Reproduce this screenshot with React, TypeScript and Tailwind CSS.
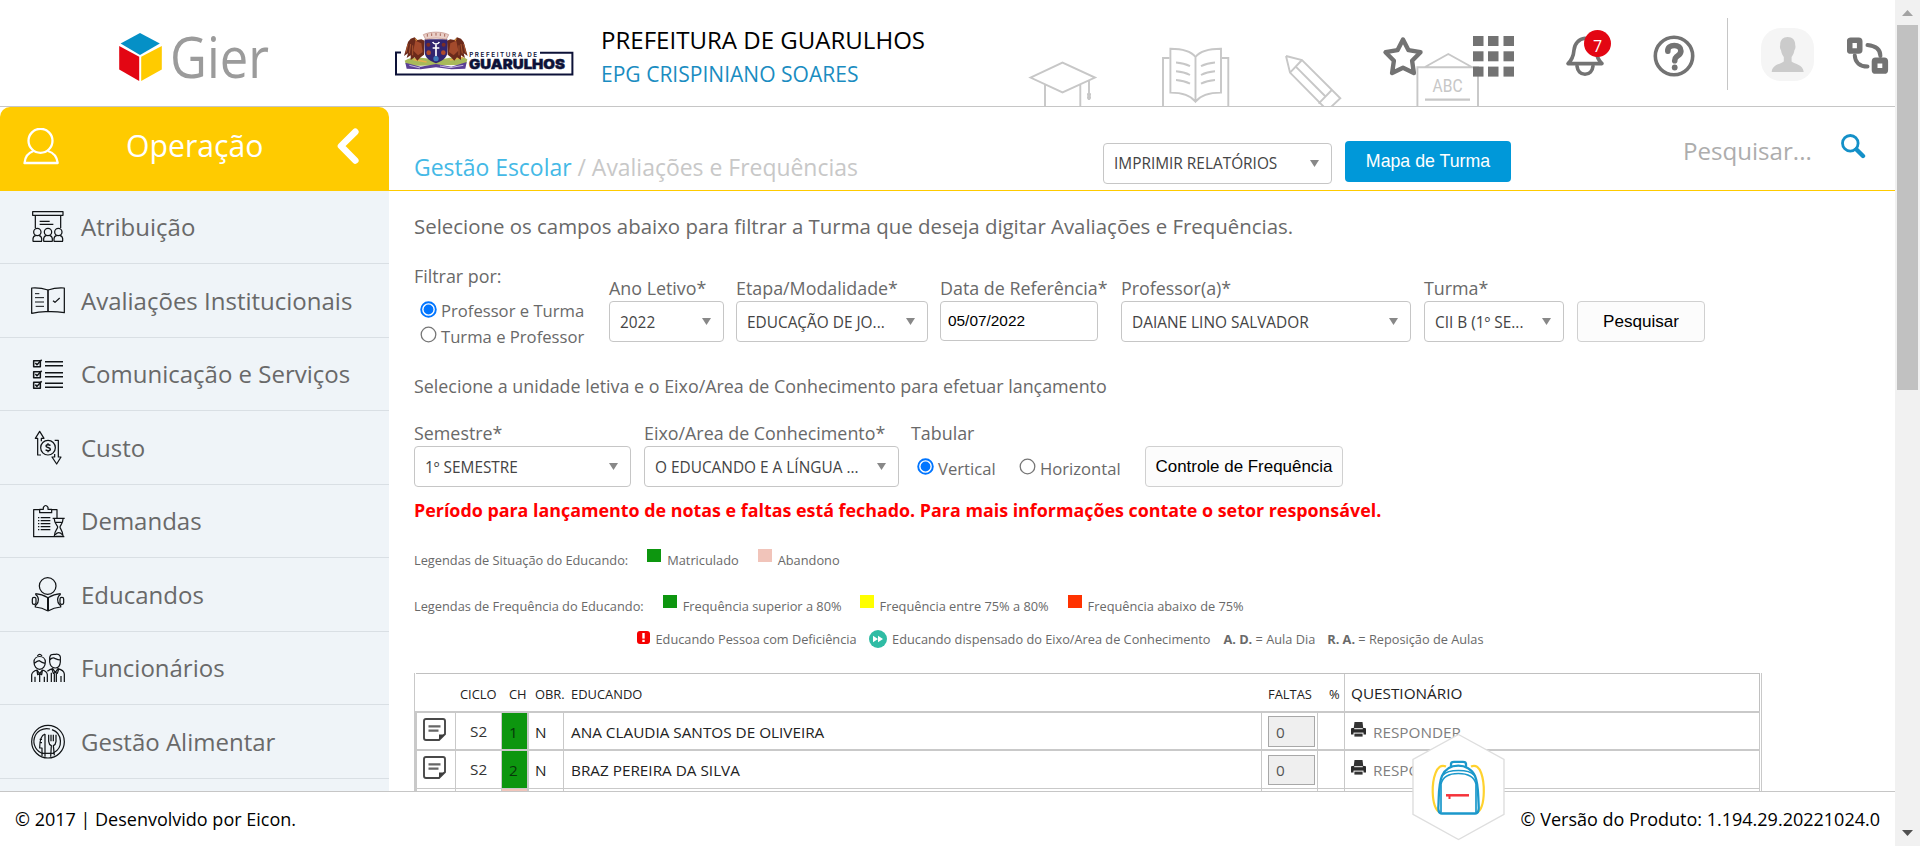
import React from "react";
import type { ReactNode } from "react";

/* ---------- header drawings ---------- */

function GierLogo() {
  return (
    <svg className="block overflow-visible" width="155" height="54" viewBox="117 30 155 54">
      <polygon points="140,33 159.8,43.6 140,55 120.6,43.6" fill="#0590c6" />
      <polygon points="119.2,46 139.2,56.8 139.2,81 119.2,69.6" fill="#e30613" />
      <polygon points="141.2,56.8 161.8,46 161.8,69.6 141.2,81" fill="#ffcb00" />
      <text x="170" y="77.8" fontSize="56" fill="#9b9b9b" textLength="99" lengthAdjust="spacingAndGlyphs" fontFamily="'Open Sans', sans-serif">
        Gier
      </text>
    </svg>
  );
}

function Eagle() {
  return (
    <g>
      <path d="M134 62 L124 58 L112 60 L104 52 L92 56 L84 66 L72 108 L84 100 L80 114 L92 106 L92 120 L104 112 L112 122 L122 112 L132 104 Z" fill="#6b2a1b" />
      <path d="M106 62 L124 70 L128 96 L114 106 L100 92 Z" fill="#a34a2c" />
      <path d="M84 72 L78 98 M92 72 L88 100 M98 76 L98 106" stroke="#a9552f" strokeWidth="3" fill="none" />
      <path d="M112 60 L104 54 L108 64 Z" fill="#e09a3c" />
    </g>
  );
}

function CityLogo() {
  return (
    <svg className="block" width="182" height="50" viewBox="394 28 182 50">
      <path d="M401 52.6 H396 V74.6 H572.4 V52.8 H540" fill="none" stroke="#0d1238" strokeWidth="2" />
      <g transform="translate(380 20) scale(0.3333)">
        <path d="M74 122 C100 104 132 116 168 118 C204 120 232 100 262 118 L258 134 L80 138 Z" fill="#a8b95a" />
        <path d="M100 118 L140 126 M210 120 L250 112" stroke="#e6b04e" strokeWidth="5" />
        <path d="M76 128 L122 140 L168 132 L214 140 L260 126 L256 146 L214 148 L168 142 L122 148 L80 146 Z" fill="#5b3f95" />
        <path d="M88 136 L120 144 M180 138 L210 143 L250 136" stroke="#c7b9e2" strokeWidth="3" fill="none" />
        <Eagle />
        <g transform="translate(335 0) scale(-1 1)">
          <Eagle />
        </g>
        <path d="M134 58 H202 V96 C202 114 184 124 168 130 C152 124 134 114 134 96 Z" fill="#32256f" />
        <circle cx="145" cy="74" r="6" fill="#7b2d26" />
        <circle cx="191" cy="74" r="6" fill="#7b2d26" />
        <circle cx="146" cy="98" r="7" fill="#b04a2b" />
        <circle cx="190" cy="98" r="7" fill="#b04a2b" />
        <circle cx="168" cy="116" r="8" fill="#3d79b8" />
        <path d="M168 74 V108 M158 84 H178 M158 66 C162 74 174 74 178 66" stroke="#fff" strokeWidth="5" fill="none" />
        <path d="M130 44 C150 34 186 34 206 44 L199 58 C180 53 156 53 137 58 Z" fill="#ead0c8" stroke="#b98478" strokeWidth="2" />
        <path d="M142 42 V50 M155 40 V48 M168 39 V47 M181 40 V48 M194 42 V50" stroke="#a8685a" strokeWidth="3" />
      </g>
      <text x="469.2" y="56.6" fontSize="6.3" fontWeight="600" fill="#0d1238" textLength="68" fontFamily="Inter, sans-serif">
        PREFEITURA DE
      </text>
      <text x="469" y="68.8" fontSize="13.6" fontWeight="900" fill="#0d1238" stroke="#0d1238" strokeWidth="0.4" textLength="96" lengthAdjust="spacingAndGlyphs" fontFamily="Inter, sans-serif">
        GUARULHOS
      </text>
    </svg>
  );
}

function SchoolDoodles() {
  return (
    <svg className="absolute left-[1025px] top-[46px]" width="460" height="60" viewBox="1025 46 460 60" fill="none" stroke="#c7c7c7" strokeWidth="1.9">
      <path d="M1030.5 77.6 L1062.5 62.6 L1095 77.6 L1062.5 92.4 Z M1045 85 V107 M1080.3 85 V107 M1089 80.5 V94" />
      <path d="M1087 94.5 H1091 M1087 97.5 H1091 M1089 94 V100" strokeWidth="2.4" />
      <path d="M1169.5 58 H1163 V107 M1222 58 H1228.3 V107" />
      <path d="M1195.5 57 C1190 50 1179 48.8 1170.4 48.8 V92.6 C1181 92.6 1190 94.5 1195.5 101.6 C1201 94.5 1210 92.6 1221 92.6 V48.8 C1212 48.8 1201 50 1195.5 57 V101" />
      <path d="M1176 62.5 Q1184 63 1190 66.2 M1176 71.3 Q1184 71.8 1190 75 M1176 80 Q1184 80.5 1190 83.7 M1215 62.5 Q1207 63 1201 66.2 M1215 71.3 Q1207 71.8 1201 75 M1215 80 Q1207 80.5 1201 83.7" />
      <path d="M1286 56 L1302 60 L1340.3 98.3 L1331 107 M1286 56 L1290 72.6 L1324 107 M1302 60 L1290 72.6 M1296 66.8 L1326 97 M1331.8 90 L1318.6 103.6" />
      <path d="M1417.4 107 V67.3 H1478 V107 M1425 67 L1448.3 54 L1471.7 67" />
      <path d="M1425 99.7 H1470" strokeWidth="2.2" />
      <text x="1432.6" y="92.4" fontSize="17.5" fill="#c7c7c7" stroke="none" textLength="30" lengthAdjust="spacingAndGlyphs" fontFamily="Roboto, sans-serif">
        ABC
      </text>
    </svg>
  );
}

function StarIcon() {
  return (
    <svg className="block" width="42" height="42" viewBox="1382.5 35 42 42">
      <path d="M1403.5 39.5 L1409 50.2 L1421 52.2 L1412.6 60.8 L1414.4 73 L1403.5 67.8 L1392.6 73 L1394.4 60.8 L1386 52.2 L1398 50.2 Z" fill="none" stroke="#737373" strokeWidth="4.4" strokeLinejoin="round" />
    </svg>
  );
}

function AppsIcon() {
  const xs = [0, 15, 30.5];
  const ys = [0, 15.3, 30.6];
  return (
    <svg className="block" width="41" height="41" viewBox="0 0 41 41" fill="#737373">
      {ys.map((y) => xs.map((x) => <rect key={`${x}-${y}`} x={x} y={y} width="10.5" height="10" />))}
    </svg>
  );
}

function BellIcon() {
  return (
    <svg className="block" width="42" height="42" viewBox="1564 35 42 42" fill="none" stroke="#737373" strokeWidth="3.6" strokeLinecap="round" strokeLinejoin="round">
      <path d="M1568 63.6 H1602 C1598 60 1596.5 56 1596 50 C1595.5 43.5 1591 38.8 1585 38.3 C1579 38.8 1574.5 43.5 1574 50 C1573.5 56 1572 60 1568 63.6 Z" />
      <path d="M1577 66 C1577.5 71 1580.5 74.2 1585 74.2 C1589.5 74.2 1592.5 71 1593 66" />
    </svg>
  );
}

function HelpIcon() {
  return (
    <svg className="block" width="42" height="42" viewBox="1652.5 35.3 42 42" fill="none" stroke="#737373">
      <circle cx="1673.5" cy="56.3" r="18.7" strokeWidth="3.6" />
      <path d="M1667.3 51.5 C1667 47.5 1670 45.8 1673.8 45.8 C1677.8 45.8 1680.4 48 1680.4 51.2 C1680.4 54.5 1677.8 55.6 1676 57 C1674.4 58.3 1674.2 59.4 1674.2 61" strokeWidth="5.6" strokeLinecap="round" />
      <circle cx="1674.2" cy="67.8" r="2.9" fill="#737373" stroke="none" />
    </svg>
  );
}

function Avatar() {
  return (
    <svg className="block" width="53" height="53" viewBox="0 0 53 53">
      <rect width="53" height="53" rx="20" fill="#f5f5f5" />
      <path d="M26.7 9 C31.5 9 34.3 12 34.2 17 C34.8 19 34.4 21 33.4 22.3 C33 25 32 27.3 30.6 29 V33.5 C34 36.5 42 36 42.7 44 H10.7 C11.4 36 19.4 36.5 22.8 33.5 V29 C21.4 27.3 20.4 25 20 22.3 C19 21 18.6 19 19.2 17 C19.1 12 21.9 9 26.7 9 Z" fill="#cbcbcb" />
    </svg>
  );
}

function SwitchIcon() {
  return (
    <svg className="block" width="42" height="38" viewBox="1847 36.5 42 38" fill="none" stroke="#737373">
      <rect x="1849.7" y="39.7" width="10" height="10.8" rx="1" strokeWidth="5.6" />
      <rect x="1874.6" y="60" width="10.6" height="10.4" rx="1" strokeWidth="5.8" />
      <path d="M1867.5 44.6 C1876 45.5 1880.4 49.5 1880.4 55.5 M1854.8 55 C1855 62 1860 66 1867.5 66" strokeWidth="4" strokeLinecap="round" />
    </svg>
  );
}

/* ---------- sidebar icons ---------- */

function MenuIcon({ box, children }: { box: string; children: ReactNode }) {
  return (
    <svg className="block shrink-0 overflow-visible" width="34" height="34" viewBox={box} fill="none" stroke="#111417" strokeWidth="3.7" strokeLinejoin="round">
      {children}
    </svg>
  );
}

const menu: { label: string; height: string; icon: ReactNode }[] = [
  {
    label: "Atribuição",
    height: "h-[73px]",
    icon: (
      <MenuIcon box="93 60 102 102">
        <rect x="98" y="65" width="91" height="11" />
        <path d="M106 77 V114 M182 77 V114 M119 94 H149 M119 103 H160" />
        {[112, 144, 175].map((x) => (
          <g key={x}>
            <circle cx={x} cy="126" r="11" />
            <path d={`M${x - 13} 154 V146 Q${x - 12} 138 ${x - 5} 137 M${x + 13} 154 V146 Q${x + 12} 138 ${x + 5} 137 M${x - 14} 154 H${x + 14}`} />
          </g>
        ))}
      </MenuIcon>
    ),
  },
  {
    label: "Avaliações Institucionais",
    height: "h-[74px]",
    icon: (
      <MenuIcon box="93 280 102 102">
        <path d="M144 298 Q120 290 95 292 V368 Q120 362 144 363 Q168 362 193 366 V292 Q168 290 144 298" />
        <path d="M144 297 V364" strokeWidth="5" />
        <path d="M105 309 H118 M105 321 H132 M105 334 H132 M107 347 H132" strokeWidth="3" />
        <path d="M159 330 L165 335 L179 322" />
      </MenuIcon>
    ),
  },
  {
    label: "Comunicação e Serviços",
    height: "h-[73px]",
    icon: (
      <MenuIcon box="93 501 102 102">
        {[512, 545, 577].map((y) => (
          <g key={y}>
            <rect x="101" y={y} width="20" height="18" strokeWidth="4.6" />
            <path d={`M106 ${y + 7} L111 ${y + 12} L125 ${y - 3}`} strokeWidth="4.6" />
            <path d={`M135 ${y + 3} H189 M135 ${y + 15} H189`} strokeWidth="4.6" />
          </g>
        ))}
      </MenuIcon>
    ),
  },
  {
    label: "Custo",
    height: "h-[74px]",
    icon: (
      <MenuIcon box="93 721 102 102">
        <circle cx="144" cy="771" r="22" />
        <path d="M123 793 H113 V743 H106 L119 722 L132 743 H124 V752" />
        <path d="M164 749 H175 V799 H183 L170 820 L156 799 H164 V790" />
        <path d="M151 765 C149 761 138 761 138 766 C138 772 151 769 151 776 C151 782 139 781 137 777 M144 758 V763 M144 780 V785" strokeWidth="4.4" />
      </MenuIcon>
    ),
  },
  {
    label: "Demandas",
    height: "h-[73px]",
    icon: (
      <MenuIcon box="93 12 102 102">
        <path d="M119 29 H101 V110 H193 M155 29 H171 V54 M119 38 V28 H130 V22 Q137 11 144 22 V28 H155 V38 Z" />
        <path d="M122 53 H151 M122 62 H151 M122 71 H151 M122 80 H151 M122 89 H151" strokeWidth="4" />
        <path d="M114 53 h4 M114 62 h4 M114 71 h4 M114 80 h4 M114 89 h4" strokeWidth="4" />
        <path d="M158 55 H194 M161 109 H192 M163 57 C163 72 173 76 173 81 C173 87 163 92 163 108 M189 57 C189 72 180 76 180 81 C180 87 189 92 189 108 M167 67 H185 M166 104 Q176 92 187 104" />
      </MenuIcon>
    ),
  },
  {
    label: "Educandos",
    height: "h-[74px]",
    icon: (
      <MenuIcon box="93 232 102 102">
        <circle cx="143" cy="256" r="25" />
        <path d="M144 291 Q126 280 106 279 M144 291 Q162 280 182 279 M144 331 Q126 321 106 319 V312 M144 331 Q162 321 182 319 V312" />
        <path d="M144 290 V330" strokeWidth="6" />
        <rect x="97" y="290" width="11" height="21" rx="5" />
        <rect x="180" y="290" width="11" height="21" rx="5" />
        <path d="M106 281 C118 288 118 305 108 314 M182 281 C170 288 170 305 180 314" />
      </MenuIcon>
    ),
  },
  {
    label: "Funcionários",
    height: "h-[73px]",
    icon: (
      <MenuIcon box="93 453 102 102">
        <path d="M102 486 C102 464 136 464 136 486 C136 500 128 508 119 508 C110 508 102 500 102 486 Z M112 468 Q119 458 126 468 M103 490 Q112 482 118 482 Q126 488 135 490" />
        <path d="M95 546 V524 Q97 514 111 510 L119 521 L127 510 Q141 514 142 524 V546 M105 546 V530 M133 546 V530 M119 521 V546 M111 512 L113 524 L119 521 L125 524 L127 512" />
        <path d="M149 478 C148 460 160 463 166 463 C180 461 183 470 181 480 V486 C180 498 173 504 166 504 C157 504 150 496 149 486 Z M149 480 Q158 470 166 476 Q174 480 181 480" />
        <path d="M142 514 Q150 508 158 506 L166 517 L174 506 Q192 511 193 522 V546 M183 546 V528 M154 518 V546 M163 546 V521 M169 546 V521 M156 508 L160 520 L166 517 L172 520 L176 508" />
      </MenuIcon>
    ),
  },
  {
    label: "Gestão Alimentar",
    height: "h-[74px]",
    icon: (
      <MenuIcon box="93 673 102 102">
        <circle cx="144" cy="723" r="49" />
        <path d="M130 759 A38 38 0 0 1 150 685 M156 687 A38 38 0 0 1 160 757" />
        <path d="M135 700 C122 704 119 722 119 742 H126 V766 M135 700 V768 M119 716 H126 M119 726 H126" />
        <path d="M146 702 V722 Q147 732 154 735 L152 768 M168 702 V722 Q167 732 160 735 L163 764 M153 702 V722 M160 702 V722" />
        <path d="M126 758 H162" />
      </MenuIcon>
    ),
  },
];

/* ---------- form pieces ---------- */

function SelectBox({ text, width, offset = "pt-[3px]" }: { text: string; width: string; offset?: string }) {
  return (
    <div className={`${width} flex h-[41px] shrink-0 items-center justify-between rounded-[4px] border border-[#c6c6c6] bg-white pr-[12px] pl-[10px]`}>
      <span className={`${offset} text-[15.4px] leading-[20px] whitespace-nowrap text-[#444]`}>{text}</span>
      <svg width="9" height="7" viewBox="0 0 9 7">
        <path d="M0 0 H9 L4.5 7 Z" fill="#888" />
      </svg>
    </div>
  );
}

function Field({ label, className, children }: { label: string; className: string; children: ReactNode }) {
  return (
    <div className={`${className} shrink-0`}>
      <div className="h-[26px] text-[17.87px] leading-[26px] whitespace-nowrap">{label}</div>
      {children}
    </div>
  );
}

function Radio({ checked }: { checked?: boolean }) {
  return (
    <svg className="block shrink-0" width="17" height="17" viewBox="0 0 17 17">
      <circle cx="8.5" cy="8.5" r="7.3" fill="#fff" stroke={checked ? "#0075ff" : "#767676"} strokeWidth={checked ? 1.9 : 1.3} />
      {checked && <circle cx="8.5" cy="8.5" r="4.9" fill="#0075ff" />}
    </svg>
  );
}

function Swatch({ color, text, gap }: { color: string; text: string; gap: string }) {
  return (
    <div className={`${gap} flex items-center`}>
      <span className={`${color} mb-[9px] h-[13px] w-[14px]`} />
      <span className="ml-[6px]">{text}</span>
    </div>
  );
}

function NoteIcon() {
  return (
    <svg className="block" width="23" height="23" viewBox="0 0 23 23">
      <path d="M3 1 H20 Q22 1 22 3 V16 L16 22 H3 Q1 22 1 20 V3 Q1 1 3 1 Z" fill="#fff" stroke="#484848" strokeWidth="1.9" />
      <path d="M16 22 V16.6 H22 Z" fill="#3c3c3c" />
      <path d="M5.5 8.3 H17.5 M5.5 12.6 H15.5" stroke="#666" strokeWidth="2.2" />
    </svg>
  );
}

function PrinterIcon() {
  return (
    <svg className="block" width="15" height="15" viewBox="0 0 15 15">
      <path d="M3.5 0 H11.5 L12.3 6.5 H2.7 Z" fill="#333" />
      <path d="M1 6 H14 Q15 6 15 7 V12.5 H0 V7 Q0 6 1 6 Z" fill="#2b2b2b" />
      <rect x="3.2" y="6.2" width="8.6" height="1" fill="#fff" />
      <rect x="2.5" y="10.6" width="10" height="4.4" fill="#fff" />
      <rect x="3.4" y="11.6" width="8.2" height="3" fill="#333" />
    </svg>
  );
}

function StudentRow({ num, name, className, inputHeight }: { num: number; name: string; className: string; inputHeight: string }) {
  return (
    <div className={`${className} flex border-r border-l-2 border-[#c9c9c9] text-[15.3px] leading-[38px] text-[#222]`}>
      <div className="w-[39px] border-r border-[#c9c9c9] pt-[5px] pl-[6px]">
        <NoteIcon />
      </div>
      <div className="w-[46px] border-r border-[#c9c9c9] pl-[14px] leading-[37px] text-[#333]">S2</div>
      <div className="w-[27px] border-r-2 border-[#c9c9c9] bg-[#0d960f] pl-[7px] text-[#07370a]">{num}</div>
      <div className="w-[35px] border-r border-[#c9c9c9] pl-[6px]">N</div>
      <div className="w-[698px] border-r border-[#c9c9c9] pl-[7px]">{name}</div>
      <div className="w-[56px] border-r border-[#c9c9c9] pt-[3px] pl-[6px]">
        <div className={`${inputHeight} w-[47px] border border-[#a8a8a8] bg-[#efefef] pl-[7px] text-[#555]`}>0</div>
      </div>
      <div className="w-[27px] border-r border-[#c9c9c9]" />
      <div className="flex pl-[6px]">
        <div className="pt-[9px]">
          <PrinterIcon />
        </div>
        <span className="ml-[7px] text-[#808080]">RESPONDER</span>
      </div>
    </div>
  );
}

function Backpack() {
  return (
    <svg className="absolute left-[1411px] top-[732px]" width="95" height="110" viewBox="1411 732 95 110" fill="none">
      <path d="M1458.5 734.5 L1504 759.4 V814.4 L1458.5 839.5 L1413 814.4 V759.4 Z" fill="#fff" stroke="#dedede" strokeWidth="1.4" />
      <path d="M1446 766.5 C1436 762 1432.5 780 1432.7 792 C1433 802 1435 810 1440 812.5 M1471 766.5 C1481 762 1484 780 1483.8 792 C1483.6 802 1482 810 1477 812.5" stroke="#ffd22e" strokeWidth="2.2" />
      <g stroke="#1b98cb" strokeWidth="2.3">
        <path d="M1442 813.5 H1475 C1479 813.5 1479 809 1478.6 804 C1478 794 1478.5 784 1475 776 C1472 769 1465 765.6 1458.3 765.6 C1451.5 765.6 1445 769 1442 776 C1438.5 784 1439 794 1438.5 804 C1438 809 1438 813.5 1442 813.5 Z" />
        <path d="M1441 812 V784 C1443 776 1450 773.5 1458.3 773.5 C1467 773.5 1474 776 1476 784 V812" strokeWidth="1.7" />
        <path d="M1443 775 C1448 769 1469 769 1474 775" strokeWidth="1.5" />
        <path d="M1451 767 V764 Q1451 761.8 1454 761.8 H1463 Q1466 761.8 1466 764 V767" />
      </g>
      <path d="M1446 795.3 H1469" stroke="#f5333a" strokeWidth="2.5" />
      <path d="M1449.5 795 V799" stroke="#f5333a" strokeWidth="2" />
    </svg>
  );
}

export default function App() {
  return (
    <div className="relative flex h-[846px] w-[1920px] overflow-hidden bg-white font-['Open_Sans',sans-serif] text-[#696969]">
      <div className="flex w-[1895px] flex-col">
        {/* header */}
        <header className="relative flex h-[107px] shrink-0 border-b border-[#c6c6c6]">
          <SchoolDoodles />
          <div className="relative ml-[117px] pt-[30px]">
            <GierLogo />
          </div>
          <div className="ml-[122px] pt-[28px]">
            <CityLogo />
          </div>
          <div className="ml-[25px] w-[782px] pt-[23px] whitespace-nowrap">
            <div className="text-[24.05px] leading-[34px] text-black">PREFEITURA DE GUARULHOS</div>
            <div className="text-[21.05px] leading-[34px] text-[#1a8cc1]">EPG CRISPINIANO SOARES</div>
          </div>
          <div className="relative flex">
            <div className="-ml-[1px] pt-[35px]">
              <StarIcon />
            </div>
            <div className="ml-[49px] pt-[36px]">
              <AppsIcon />
            </div>
            <div className="relative ml-[50px] pt-[35px]">
              <BellIcon />
              <span className="absolute top-[30px] left-[20px] h-[27px] w-[27px] rounded-full bg-[#e30613] text-center text-[16px] leading-[33px] text-white">7</span>
            </div>
            <div className="ml-[47px] pt-[35px]">
              <HelpIcon />
            </div>
            <div className="mt-[18px] ml-[32px] h-[72px] w-px bg-[#c6c6c6]" />
            <div className="mt-[28px] ml-[33px]">
              <Avatar />
            </div>
            <div className="ml-[33px] pt-[37px]">
              <SwitchIcon />
            </div>
          </div>
        </header>

        <div className="flex h-[684px] shrink-0 overflow-hidden">
          {/* sidebar */}
          <nav className="w-[389px] shrink-0 bg-[#eff4f8]">
            <div className="bg-white">
              <div className="flex h-[84px] items-start rounded-t-[10px] bg-[#ffcb00] pt-[21px] pl-[23px] text-white">
                <svg className="block" width="37" height="37" viewBox="23.5 128 37 37" fill="none" stroke="#fff" strokeWidth="2.3" strokeLinejoin="round">
                  <ellipse cx="41" cy="140.8" rx="12" ry="12" />
                  <path d="M34 151 C28 153 25.5 157 25 163 H58.2 C57.5 157 55 153 48.5 151" />
                </svg>
                <span className="ml-[66px] w-[210px] text-[30.2px] leading-[35px]">Operação</span>
                <svg className="block" width="24" height="37" viewBox="336 128 24 37" fill="none" stroke="#fff" strokeWidth="6.6" strokeLinecap="round">
                  <path d="M355.3 131.8 L341 146 L355.3 160.5" strokeLinejoin="round" />
                </svg>
              </div>
            </div>
            {menu.map((m) => (
              <div key={m.label} className={`${m.height} flex items-center border-b border-[#d9dfe4] pl-[31px]`}>
                {m.icon}
                <span className="ml-[16px] text-[24px] leading-[34px] whitespace-nowrap">{m.label}</span>
              </div>
            ))}
          </nav>

          {/* content */}
          <main className="w-[1506px]">
            <div className="flex h-[84px] border-b border-[#ffcb00] pl-[25px] whitespace-nowrap">
              <div className="w-[689px] pt-[43px] text-[22.95px] leading-[34px] text-[#c8c8c8]">
                <span className="text-[#44b9e6]">Gestão Escolar</span> / Avaliações e Frequências
              </div>
              <div className="pt-[36px]">
                <SelectBox text="IMPRIMIR RELATÓRIOS" width="w-[229px]" offset="pt-px" />
              </div>
              <div className="mt-[34px] ml-[13px] h-[41px] w-[166px] rounded-[4px] bg-[#0098d9] text-center font-['Liberation_Sans',sans-serif] text-[17.75px] leading-[41px] text-white">
                Mapa de Turma
              </div>
              <div className="ml-[172px] w-[157px] pt-[27px] text-[24.1px] leading-[34px] text-[#adadad]">Pesquisar...</div>
              <svg className="mt-[26px]" width="26" height="26" viewBox="1840 133 26 26" fill="none" stroke="#1490c8">
                <circle cx="1850.3" cy="143.3" r="7.8" strokeWidth="2.8" />
                <path d="M1856.5 149.5 L1863 156" strokeWidth="4.4" strokeLinecap="round" />
              </svg>
            </div>

            <div className="pl-[25px] whitespace-nowrap">
              <div className="h-[70px] text-[20.42px] leading-[70px]">
                Selecione os campos abaixo para filtrar a Turma que deseja digitar Avaliações e Frequências.
              </div>

              <div className="flex h-[88px]">
                <div className="w-[195px] shrink-0 text-[16.65px] leading-[28px]">
                  <div className="h-[30px] text-[17.87px] leading-[30px]">Filtrar por:</div>
                  <div className="mt-[6px] flex h-[26px] pl-[6px]">
                    <div className="pt-[4px]">
                      <Radio checked />
                    </div>
                    <span className="ml-[4px]">Professor e Turma</span>
                  </div>
                  <div className="flex h-[26px] pl-[6px]">
                    <div className="pt-[3px]">
                      <Radio />
                    </div>
                    <span className="ml-[4px]">Turma e Professor</span>
                  </div>
                </div>
                <div className="flex pt-[14px]">
                  <Field label="Ano Letivo*" className="w-[127px]">
                    <SelectBox text="2022" width="w-[115px]" />
                  </Field>
                  <Field label="Etapa/Modalidade*" className="w-[204px]">
                    <SelectBox text="EDUCAÇÃO DE JO..." width="w-[192px]" />
                  </Field>
                  <Field label="Data de Referência*" className="w-[181px]">
                    <div className="h-[40px] w-[158px] rounded-[4px] border border-[#c6c6c6] pl-[7px] font-['Liberation_Sans',sans-serif] text-[15.4px] leading-[37px] text-black">
                      05/07/2022
                    </div>
                  </Field>
                  <Field label="Professor(a)*" className="w-[303px]">
                    <SelectBox text="DAIANE LINO SALVADOR" width="w-[290px]" />
                  </Field>
                  <Field label="Turma*" className="w-[153px]">
                    <SelectBox text="CII B (1º SE..." width="w-[140px]" />
                  </Field>
                  <div className="mt-[26px] h-[41px] w-[128px] rounded-[4px] border border-[#d0d0d0] bg-[#fcfcfc] text-center font-['Liberation_Sans',sans-serif] text-[17.1px] leading-[40px] text-black">
                    Pesquisar
                  </div>
                </div>
              </div>

              <div className="h-[71px] text-[17.86px] leading-[74px]">
                Selecione a unidade letiva e o Eixo/Area de Conhecimento para efetuar lançamento
              </div>

              <div className="flex h-[67px]">
                <Field label="Semestre*" className="w-[230px]">
                  <SelectBox text="1º SEMESTRE" width="w-[217px]" />
                </Field>
                <Field label="Eixo/Area de Conhecimento*" className="w-[267px]">
                  <SelectBox text="O EDUCANDO E A LÍNGUA ..." width="w-[255px]" />
                </Field>
                <Field label="Tabular" className="w-[234px]">
                  <div className="flex pt-[9px] pl-[6px] text-[16.65px] leading-[28px]">
                    <div className="pt-[3px]">
                      <Radio checked />
                    </div>
                    <span className="ml-[4px] w-[81px]">Vertical</span>
                    <div className="pt-[3px]">
                      <Radio />
                    </div>
                    <span className="ml-[4px]">Horizontal</span>
                  </div>
                </Field>
                <div className="mt-[26px] h-[41px] w-[198px] rounded-[4px] border border-[#d0d0d0] bg-[#fcfcfc] text-center font-['Liberation_Sans',sans-serif] text-[16.95px] leading-[40px] text-black">
                  Controle de Frequência
                </div>
              </div>

              <div className="h-[45px] text-[17.87px] leading-[47px] font-bold text-[#ff0000]">
                Período para lançamento de notas e faltas está fechado. Para mais informações contate o setor responsável.
              </div>

              <div className="text-[12.8px] leading-[22px]">
                <div className="flex h-[56px] items-center">
                  <span>Legendas de Situação do Educando:</span>
                  <Swatch color="bg-[#0d960f]" text="Matriculado" gap="ml-[19px]" />
                  <Swatch color="bg-[#f1c4ba]" text="Abandono" gap="ml-[19px]" />
                </div>
                <div className="flex h-[36px] items-center">
                  <span>Legendas de Frequência do Educando:</span>
                  <Swatch color="bg-[#0d960f]" text="Frequência superior a 80%" gap="ml-[19px]" />
                  <Swatch color="bg-[#ffff00]" text="Frequência entre 75% a 80%" gap="ml-[18px]" />
                  <Swatch color="bg-[#ff3200]" text="Frequência abaixo de 75%" gap="ml-[19px]" />
                </div>
                <div className="flex h-[30px] items-center pl-[223px] text-[12.76px]">
                  <svg className="mb-[3px]" width="13" height="13" viewBox="0 0 13 13">
                    <rect width="13" height="13" rx="3" fill="#f50000" />
                    <rect x="5.3" y="2" width="2.4" height="5.6" fill="#fff" />
                    <rect x="5.3" y="8.8" width="2.4" height="2.2" fill="#fff" />
                  </svg>
                  <span className="ml-[5.5px]">Educando Pessoa com Deficiência</span>
                  <svg className="ml-[12.5px]" width="18" height="18" viewBox="0 0 18 18">
                    <circle cx="9" cy="9" r="9" fill="#2fbca4" />
                    <path d="M4 5.8 L9 9 L4 12.2 Z M9 5.8 L14 9 L9 12.2 Z" fill="#fff" />
                  </svg>
                  <span className="ml-[5px]">Educando dispensado do Eixo/Area de Conhecimento</span>
                  <span className="ml-[13px]">
                    <b>A. D.</b> = Aula Dia
                  </span>
                  <span className="ml-[12px]">
                    <b>R. A.</b> = Reposição de Aulas
                  </span>
                </div>
              </div>

              {/* table */}
              <div className="mt-[19px] h-[140px] w-[1348px] border-r border-l border-[#c9c9c9] pr-px">
                <div className="ml-px flex h-[38px] border-t border-r border-[#c0c0c0] pl-px text-[12.9px] leading-[41px] text-[#222]">
                  <div className="w-[39px]" />
                  <div className="w-[46px] pl-[4px]">CICLO</div>
                  <div className="w-[27px] pl-[7px]">CH</div>
                  <div className="w-[35px] pl-[6px]">OBR.</div>
                  <div className="w-[698px] pl-[7px]">EDUCANDO</div>
                  <div className="w-[56px] pl-[6px]">FALTAS</div>
                  <div className="w-[27px] border-r border-[#c9c9c9] pl-[11px]">%</div>
                  <div className="pl-[6px] text-[15.3px] leading-[38px]">QUESTIONÁRIO</div>
                </div>
                <div className="h-[2px] bg-[#c9c9c9]" />
                <StudentRow num={1} name="ANA CLAUDIA SANTOS DE OLIVEIRA" className="h-[38px] border-b-2" inputHeight="h-[31px] leading-[30px]" />
                <StudentRow num={2} name="BRAZ PEREIRA DA SILVA" className="h-[38px] border-b" inputHeight="mt-px h-[30px] leading-[28px]" />
                <div className="flex h-[2px] border-r border-l-2 border-[#c9c9c9]">
                  <div className="w-[39px] border-r border-[#c9c9c9]" />
                  <div className="w-[46px] border-r border-[#c9c9c9]" />
                  <div className="w-[27px] border-r-2 border-[#c9c9c9] bg-[#f1c4ba]" />
                  <div className="w-[35px] border-r border-[#c9c9c9]" />
                  <div className="w-[698px] border-r border-[#c9c9c9]" />
                  <div className="w-[56px] border-r border-[#c9c9c9]" />
                  <div className="w-[27px] border-r border-[#c9c9c9]" />
                </div>
              </div>
            </div>
          </main>
        </div>

        {/* footer */}
        <footer className="flex h-[55px] shrink-0 justify-between border-t border-[#c6c6c6] pr-[15px] pl-[15px] text-[18px] leading-[54px] text-black">
          <span>© 2017 | Desenvolvido por Eicon.</span>
          <span>© Versão do Produto: 1.194.29.20221024.0</span>
        </footer>
      </div>

      {/* scrollbar */}
      <div className="flex w-[25px] flex-col items-center justify-between bg-[#f1f1f1] pt-[10px] pb-[10px]">
        <div className="flex flex-col items-center">
          <svg className="block" width="11" height="6" viewBox="0 0 11 6">
            <path d="M5.5 0 L11 6 H0 Z" fill="#a3a3a3" />
          </svg>
          <div className="mt-[9px] h-[365px] w-[21px] bg-[#c1c1c1]" />
        </div>
        <svg className="block" width="11" height="6" viewBox="0 0 11 6">
          <path d="M0 0 H11 L5.5 6 Z" fill="#505050" />
        </svg>
      </div>

      <Backpack />
    </div>
  );
}
